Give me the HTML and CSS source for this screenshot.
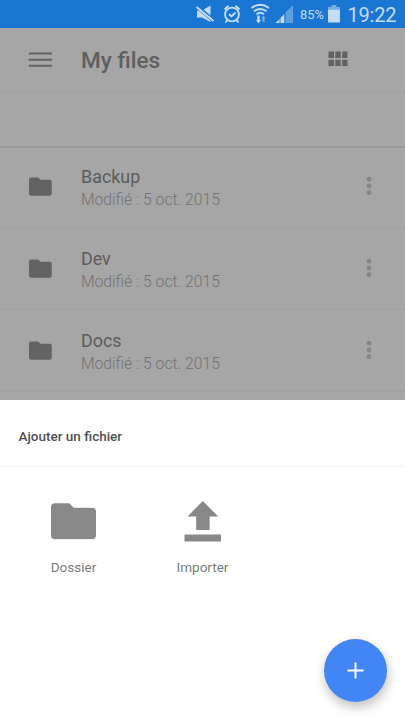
FILE: index.html
```
<!DOCTYPE html>
<html lang="fr">
<head>
<meta charset="utf-8">
<title>My files</title>
<link rel="stylesheet" href="styles.css">
</head>
<body>
<svg width="0" height="0" class="defs">
  <symbol id="folder" viewBox="0 0 46 37"><path d="M4 0.5H18.5L23 5H41.500a4 4 0 0 1 4 4V33a4 4 0 0 1-4 4H4a4 4 0 0 1-4-4V4.500a4 4 0 0 1 4-4Z"/></symbol>
  <symbol id="more" viewBox="0 0 6 20"><circle cx="3" cy="3.200" r="2.400"/><circle cx="3" cy="10" r="2.400"/><circle cx="3" cy="16.700" r="2.400"/></symbol>
</svg>
<div class="screen">
  <div class="status">
    <svg class="status-icons" width="105" height="28" viewBox="0 0 105 28">
      <path d="M2 10.500H7L15.500 5.500V22L7 17.500H2Z" fill="#c5dcf5"/>
      <path d="M1.500 6L19 21" stroke="#1976d2" stroke-width="4"/>
      <path d="M1.500 7L18.500 21" stroke="#c5dcf5" stroke-width="2"/>
      <g fill="none" stroke="#c5dcf5" stroke-width="1.900">
        <circle cx="37" cy="14.500" r="6.900"/>
        <path d="M29.500 9.500L33.500 5.800M40.500 5.800L44.500 9.500M32.500 20L30.500 22.500M41.500 20L43.500 22.500M34 14L36.500 16.500L40.500 12.500"/>
        <path d="M56.500 8Q65.300 1.500 74 8M59 11.300Q65.300 6.500 71.500 11.300M61.500 14.300Q65.300 11.300 69 14.300"/>
      </g>
      <path d="M62.300 15.500H64.700V20H66L63.500 23.500L61 20H62.300Z" fill="#c5dcf5"/>
      <path d="M67.500 22V18.500H66.300L68.500 15.500L70.700 18.500H69.500V22Z" fill="#75aee5"/>
      <path d="M98 5V23H90.500V12.500Z" fill="#5e9fe0"/>
      <path d="M80.500 23L84.500 19V23ZM85.500 18L89.300 14V23H85.500Z" fill="#c5dcf5"/>
    </svg>
    <span class="percent">85%</span>
    <svg class="battery" width="12" height="18" viewBox="0 0 12 18"><path d="M3.500 0H8.500V2H12V4.500H0V2H3.500Z" fill="#75aee5"/><path d="M0 4.500H12V17.500H0Z" fill="#c5dcf5"/></svg>
    <span class="clock">19:22</span>
  </div>
  <div class="header">
    <svg class="menu" width="24" height="16" viewBox="0 0 24 16"><path d="M1.500 1.500H23.500M1.500 7.700H23.500M1.500 13.700H23.500" stroke="#636363" stroke-width="2" stroke-linecap="round"/></svg>
    <h1>My files</h1>
    <svg class="grid" width="20" height="16" viewBox="0 0 20 16" fill="#626262"><path d="M.5.500H6V7H.5ZM7.300.500H12.700V7H7.300ZM14.200.500H19.500V7H14.200ZM.5 8.800H6V15H.5ZM7.300 8.800H12.700V15H7.300ZM14.200 8.800H19.500V15H14.200Z"/></svg>
  </div>
  <div class="subheader"></div>
  <div class="list">
    <div class="row"><svg class="folder"><use href="#folder"/></svg><div class="text"><div class="name">Backup</div><div class="date">Modifié : 5 oct. 2015</div></div><svg class="more"><use href="#more"/></svg></div>
    <div class="row"><svg class="folder"><use href="#folder"/></svg><div class="text"><div class="name">Dev</div><div class="date">Modifié : 5 oct. 2015</div></div><svg class="more"><use href="#more"/></svg></div>
    <div class="row"><svg class="folder"><use href="#folder"/></svg><div class="text"><div class="name">Docs</div><div class="date">Modifié : 5 oct. 2015</div></div><svg class="more"><use href="#more"/></svg></div>
  </div>
  <div class="sheet">
    <h2>Ajouter un fichier</h2>
    <div class="actions">
      <div class="action"><svg class="action-icon" width="46" height="42"><use href="#folder" x="0" y="1.500" width="45.500" height="37"/></svg><span>Dossier</span></div>
      <div class="action"><svg class="action-icon" width="46" height="42" viewBox="0 0 46 42"><path d="M22.800 0L38.200 15.500H29.600V29H16.200V15.500H7.500ZM4.500 33.500H41V40.500H4.500Z"/></svg><span>Importer</span></div>
    </div>
  </div>
  <div class="fab"><svg width="18" height="18" viewBox="0 0 18 18"><path d="M8.500 .5V16.500M.5 8.500H16.500" stroke="#fff" stroke-width="1.900"/></svg></div>
</div>
</body>
</html>
```
FILE: styles.css
```
* { box-sizing: border-box; }
body { margin: 0; font-family: Roboto, sans-serif; background: #fff; }
.defs { position: absolute; }
.screen { position: relative; width: 405px; height: 720px; overflow: hidden; background: #a6a6a6; }
.status { display: flex; height: 28px; padding-left: 195px; background: #1976d2; color: #c5dcf5; white-space: nowrap; }
.status-icons { flex: none; }
.percent { width: 28px; font-size: 12.8px; line-height: 30px; }
.battery { flex: none; margin-top: 5px; }
.clock { margin-left: 7.5px; font-size: 20px; line-height: 31px; letter-spacing: -.2px; }
.header { display: flex; align-items: center; height: 64px; padding: 0 57px 0 28px; border-bottom: 1px solid #a1a1a1; }
.menu { margin-right: 29px; }
h1 { flex: 1; margin: 0; padding-top: 2px; font-size: 22.6px; font-weight: 500; line-height: 28px; color: #5f5f5f; }
.grid { margin-top: -1px; }
.subheader { height: 56px; border-bottom: 2px solid #989898; }
.list { margin-top: -2px; }
.row { display: flex; height: 82px; padding: 0 33px 0 29px; border-bottom: 1px solid #a1a1a1; }
.folder { width: 23px; height: 19px; margin: 31px 29px 0 0; fill: #636363; }
.text { flex: 1; padding-top: 19px; }
.name { font-size: 17.9px; line-height: 23px; color: #5c5c5c; }
.date { font-size: 15.7px; line-height: 23px; font-weight: 300; color: #727272; }
.more { width: 6px; height: 20px; margin-top: 30px; fill: #858585; }
.sheet { position: absolute; left: 0; right: 0; top: 400px; bottom: 0; background: #fff; }
h2 { height: 67px; margin: 0; padding: 0 18.5px; border-bottom: 1px solid #f0f0f0; font-size: 13.5px; font-weight: 500; line-height: 73px; color: #505050; }
.actions { display: flex; padding: 34px 0 0 9px; }
.action { display: flex; flex-direction: column; align-items: center; width: 129px; font-size: 13.5px; line-height: 18px; color: #7b7b7b; }
.action-icon { fill: #888; margin-bottom: 15px; }
.fab { position: absolute; left: 324px; top: 639px; width: 63px; height: 63px; border-radius: 50%; background: #4285f4; display: flex; align-items: center; justify-content: center; box-shadow: 1px 5px 12px rgba(0,0,0,.26); }
```
